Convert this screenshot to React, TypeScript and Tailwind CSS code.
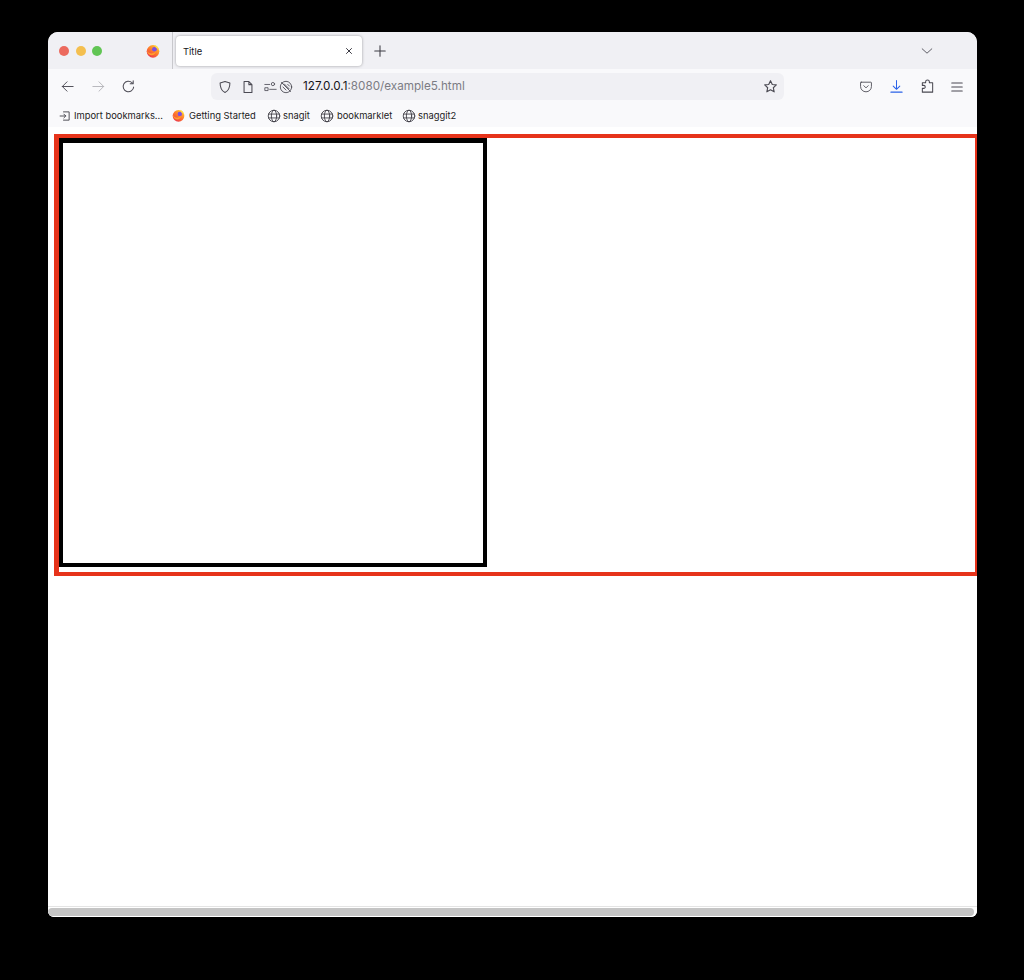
import React from "react";

const font = { fontFamily: "Inter, 'Liberation Sans', sans-serif" };

function Ico({ size = 16, className = "", children }: { size?: number; className?: string; children: React.ReactNode }) {
  return (
    <svg width={size} height={size} viewBox="0 0 16 16" fill="none" stroke="currentColor" strokeWidth={1.2} strokeLinecap="round" strokeLinejoin="round" className={`shrink-0 ${className}`}>
      {children}
    </svg>
  );
}

function Globe({ className = "" }: { className?: string }) {
  return (
    <Ico size={14} className={className}>
      <circle cx="8" cy="8" r="6.6" strokeWidth={1} />
      <ellipse cx="8" cy="8" rx="3" ry="6.6" strokeWidth={1} />
      <path d="M1.6 5.8h12.8M1.6 10.2h12.8" strokeWidth={1} />
    </Ico>
  );
}

function Firefox({ size, id, className = "" }: { size: number; id: string; className?: string }) {
  return (
    <svg width={size} height={size} viewBox="0 0 16 16" className={`shrink-0 ${className}`}>
      <defs>
        <linearGradient id={id} x1="0.8" y1="0.1" x2="0.2" y2="0.9">
          <stop offset="0" stopColor="#ffc22e" />
          <stop offset="0.5" stopColor="#ff7a2b" />
          <stop offset="1" stopColor="#ec3a4c" />
        </linearGradient>
      </defs>
      <circle cx="8" cy="8.4" r="7.2" fill={`url(#${id})`} />
      <circle cx="9.6" cy="6" r="2.7" fill="#7b4fe0" />
      <path d="M10.5 1c2.600 1.200 4.500 3.600 4.600 6.600-1-1.800-2.200-3-4-3.600-.4-1-.6-2-.6-3z" fill="#ffdf4a" />
      <path d="M1 7c1.200 3 4 4.200 6.800 3.600 1.800-.4 3-1.400 3.600-2.600-.2 3-2.600 5-5.400 4.800C3.400 12.600 1.200 10 1 7z" fill="#ffa02e" />
    </svg>
  );
}

function Bookmark({ icon, label, className }: { icon: React.ReactNode; label: string; className: string }) {
  return (
    <div className={`flex items-center ${className}`}>
      {icon}
      <span className="text-[9.4px] leading-none text-[#1c1b22] whitespace-nowrap">{label}</span>
    </div>
  );
}

export default function App() {
  return (
    <div className="w-[1024px] h-[980px] bg-black pt-[32px] pl-[48px] overflow-hidden" style={font}>
      <div className="w-[929px] h-[885px] bg-white rounded-t-[10px] rounded-b-[6px] overflow-hidden flex flex-col">
        {/* tab strip */}
        <div className="h-[37px] shrink-0 bg-[#f0f0f4] flex items-center">
          <div className="flex items-center gap-[6.5px] ml-[11px]">
            <span className="w-[10px] h-[10px] rounded-full bg-[#ec6a5e]" />
            <span className="w-[10px] h-[10px] rounded-full bg-[#f4bf4f]" />
            <span className="w-[10px] h-[10px] rounded-full bg-[#61c554]" />
          </div>
          <Firefox id="ff1" size={14} className="ml-[44px]" />
          <div className="w-px h-full bg-[#c8c8cc] ml-[12px]" />
          <div className="w-[186px] h-[30px] ml-[3px] bg-white rounded-[4px] shadow-[0_0_3px_rgba(0,0,0,0.35)] flex items-center justify-between pl-[7px] pr-[8px]">
            <span className="text-[9.4px] text-[#15141a] mt-[3px]">Title</span>
            <Ico size={10} className="text-[#3b3a42]"><path d="M4 4l8 8M12 4l-8 8" strokeWidth={1.6} /></Ico>
          </div>
          <Ico size={14} className="ml-[11px] text-[#3b3a42]"><path d="M8 2v12M2 8h12" /></Ico>
          <Ico size={14} className="ml-[533px] text-[#4a4952]"><path d="M2.500 5.500L8 10.500l5.500-5" strokeWidth={1} /></Ico>
        </div>

        {/* toolbar */}
        <div className="h-[33px] shrink-0 bg-[#f9f9fb] flex items-center pt-[2px] text-[#4a4952]">
          <Ico size={15} className="ml-[12px]"><path d="M14 8H2.500M7.500 3L2.500 8l5 5" strokeWidth={1} /></Ico>
          <Ico size={15} className="ml-[16px] text-[#b4b4ba]"><path d="M2 8h11.500M8.500 3l5 5-5 5" strokeWidth={1} /></Ico>
          <Ico size={15} className="ml-[15px]"><path d="M13.500 8.500A5.600 5.600 0 1 1 11.800 4M13 1.800v3.200H9.800" strokeWidth={1.1} /></Ico>
          <div className="w-[573px] h-[27px] ml-[75px] bg-[#f0f0f4] rounded-[6px] flex items-center">
            <Ico size={14} className="ml-[7px]"><path d="M8 1.800l5.600 1.600c0 5-1.200 8.800-5.600 10.800C3.600 12.200 2.400 8.400 2.400 3.400z" /></Ico>
            <Ico size={14} className="ml-[9px]"><path d="M3.500 1.800h5.500l3.500 3.500v8.900h-9zM9 1.800v3.500h3.500" /></Ico>
            <Ico size={13} className="ml-[9px]"><circle cx="11" cy="5" r="2" strokeWidth={1} /><path d="M1 5.500h6M7 11.500h8" strokeWidth={1} /><rect x="1.500" y="9.500" width="3.500" height="3.500" strokeWidth={1} /></Ico>
            <Ico size={14} className="ml-[2px]"><circle cx="8" cy="8" r="6.500" strokeWidth={1} /><path d="M2.800 2.800l10.400 10.400M4.500 8l3.500 3.500M6 4.500l5.500 5.500M10 5l2 2" strokeWidth={1} /></Ico>
            <span className="ml-[8px] mt-[1px] pl-[2px] text-[11.7px] leading-none whitespace-nowrap text-[#15141a]">
              127.0.0.1<span className="text-[#7c7c84]">:8080/example5.html</span>
            </span>
            <Ico size={15} className="ml-auto mr-[6px]"><path d="M8 1.800l1.900 4 4.300.5-3.200 3 .9 4.400L8 11.500l-3.900 2.200.9-4.400-3.200-3 4.300-.5z" /></Ico>
          </div>
          <Ico size={14} className="ml-[75px]"><path d="M2.500 2.500h11c.500 0 .700.300.700.700v4.300c0 3.500-2.900 6-6.200 6s-6.200-2.500-6.200-6V3.200c0-.400.200-.700.700-.700zM5.500 6.500L8 9l2.500-2.500" strokeWidth={1} /></Ico>
          <Ico size={15} className="ml-[16px] text-[#2a62e8]"><path d="M8 1.500v9M4.500 7.500L8 11l3.500-3.500M2 14h12" strokeWidth={1.1} /></Ico>
          <Ico size={15} className="ml-[16px]"><path d="M2.500 14V10H4a1.600 1.600 0 0 0 0-3.200H2.500V4H6V3a2 2 0 0 1 4 0v1h3.500v10z" strokeWidth={1.1} /></Ico>
          <Ico size={14} className="ml-[15px]"><path d="M2 3.500h12M2 8h12M2 12.500h12" /></Ico>
        </div>

        {/* bookmarks */}
        <div className="h-[25px] shrink-0 bg-[#f9f9fb] flex items-center pt-[2px] text-[#3f3e46]">
          <Bookmark
            className="ml-[11px] w-[113px]"
            label="Import bookmarks..."
            icon={<Ico size={12} className="mr-[3px]"><path d="M6 2.500h7.500v11H6M1.500 8h7.500M6.500 5.500L9 8l-2.500 2.500" /></Ico>}
          />
          <Bookmark className="w-[95px]" label="Getting Started" icon={<Firefox id="ff2" size={13} className="mr-[4px]" />} />
          <Bookmark className="w-[53px]" label="snagit" icon={<Globe className="mr-[2px]" />} />
          <Bookmark className="w-[82px]" label="bookmarklet" icon={<Globe className="mr-[3px]" />} />
          <Bookmark className="" label="snaggit2" icon={<Globe className="mr-[2px]" />} />
        </div>

        {/* page */}
        <div className="flex-1 min-h-0 bg-white pt-[7px] pl-[6px] flex flex-col">
          <div className="w-[923px] h-[442px] shrink-0 border-solid border-[#e6331a] border-t-[4px] border-b-[4px] border-l-[5px] border-r-[2px]">
            <div className="w-[428px] h-[429px] border-solid border-black border-t-[5px] border-b-[4px] border-l-[4px] border-r-[4px] bg-white" />
          </div>
          <div className="flex-1" />
        </div>

        {/* horizontal scrollbar */}
        <div className="h-[11px] shrink-0 bg-white border-t border-[#e4e4e4] pt-[1px]">
          <div className="h-[8px] bg-[#c4c4c4] rounded-[4px] mr-[3px]" />
        </div>
      </div>
    </div>
  );
}
